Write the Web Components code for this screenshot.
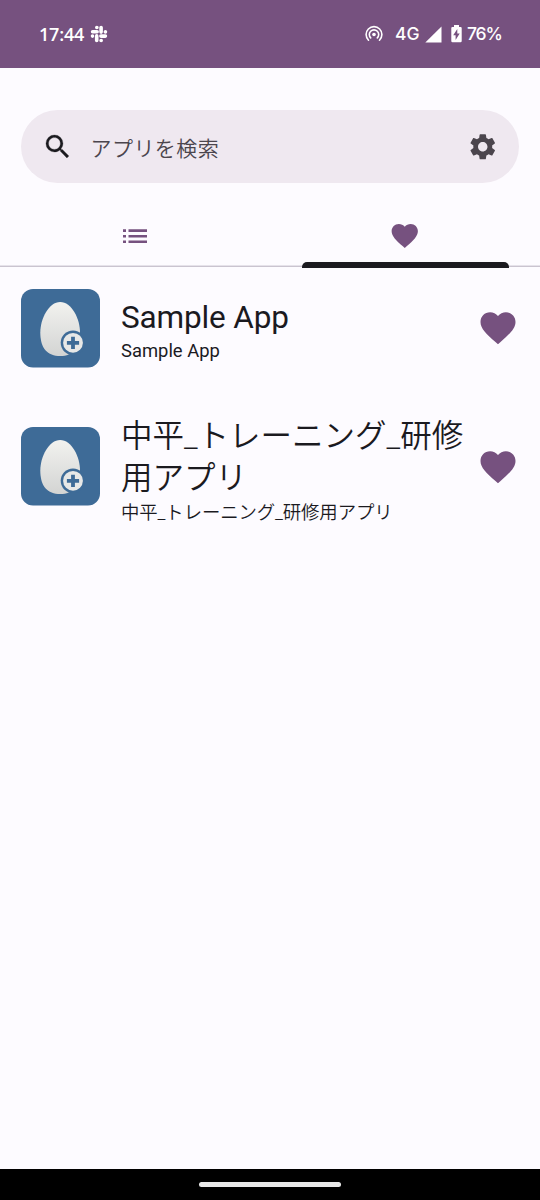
<!DOCTYPE html>
<html lang="ja"><head><meta charset="utf-8"><title>アプリ一覧</title>
<style>
body{margin:0;background:#fdfbff;color:#1b1a1f;font-family:Roboto,"Noto Sans CJK JP",sans-serif}
</style></head><body>
<app-screen></app-screen>
<script>
function define(name, html){
  const t=document.createElement('template'); t.innerHTML=html;
  customElements.define(name, class extends HTMLElement{
    constructor(){super();this.attachShadow({mode:'open'}).append(t.content.cloneNode(true));}
  });
}
define('status-bar',`<style>
:host{display:flex;box-sizing:border-box;height:68px;background:#76517f;color:#fff;align-items:center;padding:0 40px 0 39px;font:500 17.5px/24px Inter,sans-serif}
svg{display:block;flex:none}
.time{width:45px;margin-right:6px;font:600 18px/24px "Open Sans",sans-serif;letter-spacing:-.2px;white-space:nowrap}
.cast{margin-left:auto;margin-right:12px}
.net{width:25px;margin-right:5px;white-space:nowrap}
.sig{margin-right:9px}.bat{margin-right:5px}
.pct{width:33px;white-space:nowrap;letter-spacing:-1.1px}
</style>
<span class="time">17:44</span>
<svg width="18" height="18" viewBox="0 0 18 18" stroke="#fff" stroke-width="3.6" stroke-linecap="round" fill="none"><path d="M6.7 10.9v4.5M10.9 11.1h4.5M11.1 2.6v4.5M2.6 6.8h4.5"/><path d="M6.8 2.5h.1M15.4 6.8v.1M11.1 15.5h.1M2.5 11v.1"/></svg>
<svg class="cast" width="18" height="18" viewBox="0 0 18 18" fill="none" stroke="#fff" stroke-width="1.6" stroke-linecap="round"><path d="M3.5 15.2a7.9 7.9 0 1 1 11 0M5.7 12.9a4.7 4.7 0 1 1 6.6 0"/><circle cx="9" cy="9.5" r="1.8" fill="#fff" stroke="none"/></svg>
<span class="net">4G</span>
<svg class="sig" width="17" height="17" viewBox="0 0 17 17"><path d="M16.5.5v16H.3z" fill="#fff"/></svg>
<svg class="bat" width="11" height="18" viewBox="0 0 11 18"><path d="M3 0h5v2h1.6q1.1 0 1.1 1.1v12.8q0 1.3-1.2 1.3h-8Q.3 17.2.3 16V3.1Q.3 2 1.4 2H3z" fill="#fff"/><path d="M6.3 4 2.2 10.3h2.4V15l4.1-6.4H6.3z" fill="#76517f"/></svg>
<span class="pct">76%</span>`);
define('search-field',`<style>
:host{display:flex;box-sizing:border-box;height:73px;margin:42px 21px 0;border-radius:37px;background:#efe8f0;align-items:center;padding:1px 20.5px 0 21px}
svg{display:block;flex:none}
span{flex:1;margin-left:17px;font-family:"Noto Sans CJK JP DemiLight","Noto Sans CJK JP",sans-serif;font-size:21px;font-weight:350;line-height:32px;letter-spacing:.45px;color:#4b454d}
</style>
<svg width="31.5" height="31.5" viewBox="0 0 24 24" fill="#1b1a1f" stroke="#1b1a1f" stroke-width=".2"><path d="M15.5 14h-.79l-.28-.27A6.47 6.47 0 0 0 16 9.5 6.5 6.5 0 1 0 9.5 16c1.61 0 3.09-.59 4.23-1.57l.27.28v.79l5 4.99L20.49 19l-4.99-5zm-6 0C7.01 14 5 11.99 5 9.5S7.01 5 9.5 5 14 7.01 14 9.5 11.99 14 9.5 14z"/></svg>
<span><slot></slot></span>
<svg width="31.5" height="31.5" viewBox="0 0 24 24" fill="#4b454d"><path d="M19.14 12.94c.04-.3.06-.61.06-.94 0-.32-.02-.64-.07-.94l2.03-1.58c.18-.14.23-.41.12-.61l-1.92-3.32c-.12-.22-.37-.29-.59-.22l-2.39.96c-.5-.38-1.03-.7-1.62-.94l-.36-2.54c-.04-.24-.24-.41-.48-.41h-3.84c-.24 0-.43.17-.47.41l-.36 2.54c-.59.24-1.13.57-1.62.94l-2.39-.96c-.22-.08-.47 0-.59.22L2.74 8.87c-.12.21-.08.47.12.61l2.03 1.58c-.05.3-.09.63-.09.94s.02.64.07.94l-2.03 1.58c-.18.14-.23.41-.12.61l1.92 3.32c.12.22.37.29.59.22l2.39-.96c.5.38 1.03.7 1.62.94l.36 2.54c.05.24.24.41.48.41h3.84c.24 0 .44-.17.47-.41l.36-2.54c.59-.24 1.13-.56 1.62-.94l2.39.96c.22.08.47 0 .59-.22l1.92-3.32c.12-.22.07-.47-.12-.61l-2.01-1.58zM12 15.6c-1.98 0-3.6-1.62-3.6-3.6s1.62-3.6 3.6-3.6 3.6 1.62 3.6 3.6-1.62 3.6-3.6 3.6z"/></svg>`);
define('heart-icon',`<style>:host{display:block;flex:none;width:var(--size,31.5px);height:var(--size,31.5px)}svg{display:block;width:100%;height:100%}</style>
<svg viewBox="0 0 24 24" fill="#76517f"><path d="M12 21.35l-1.45-1.32C5.4 15.36 2 12.28 2 8.5 2 5.42 4.42 3 7.5 3c1.74 0 3.41.81 4.5 2.09C13.09 3.81 14.76 3 16.5 3 19.58 3 22 5.42 22 8.5c0 3.78-3.4 6.86-8.55 11.54L12 21.35z"/></svg>`);
define('tab-bar',`<style>
:host{display:grid;grid-template-columns:1fr 1fr;box-sizing:border-box;height:63px;margin-top:21px;background:linear-gradient(#cac4d0,#cac4d0) 0 62px/100% 1px no-repeat,linear-gradient(#e6e2ea,#e6e2ea) 0 61px/100% 2px no-repeat}
div{display:grid;grid-template-rows:58px 5px;justify-items:center;align-items:center}
.list{display:block;margin-top:6px}heart-icon{margin-top:5px}
.bar{width:207px;height:5.5px;border-radius:5px 5px 0 0;background:#1b1a1f;align-self:start}
</style>
<div><svg class="list" width="24" height="15" viewBox="0 0 24 15" fill="#76517f"><path d="M0 .3h3v2.6H0zM0 5.9h3v2.6H0zM0 11.5h3v2.6H0zM5.5.3H24v2.6H5.5zM5.5 5.9H24v2.6H5.5zM5.5 11.5H24v2.6H5.5z"/></svg></div>
<div><heart-icon></heart-icon><span class="bar"></span></div>`);
define('egg-icon',`<style>:host{display:block;flex:none;width:79px;height:79px}svg{display:block}</style>
<svg width="79" height="79" viewBox="0 0 79 79"><defs><linearGradient id="g" x2="0" y2="1"><stop stop-color="#f2f2ef"/><stop offset="1" stop-color="#d3d4d3"/></linearGradient></defs>
<rect width="79" height="78.5" rx="12" fill="#3e6b97"/><path d="M39.2 13C50.5 13 59 29.5 59 43.5 59 59.5 52 67 39.2 67S19.3 59.5 19.3 43.5C19.3 29.5 28 13 39.2 13z" fill="url(#g)"/><circle cx="52" cy="53.8" r="12.3" fill="#3e6b97"/><circle cx="52" cy="53.8" r="9.9" fill="#e7e8e7"/><path d="M52 47.7v12.2M45.9 53.8h12.2" stroke="#3e6b97" stroke-width="3.8"/></svg>`);
define('app-row',`<style>
:host{display:flex;box-sizing:border-box;align-items:center;padding:0 21px}
.t{flex:1;margin-left:21px;padding-top:var(--shift,4px);min-width:0}
.n{font-size:31.5px;line-height:42px;width:346px;letter-spacing:var(--ls,0)}
.s{font-size:18.4px;line-height:var(--sub,26px);letter-spacing:var(--sls,0)}
heart-icon{--size:42px}
</style><egg-icon></egg-icon><div class="t"><div class="n"><slot name="name"></slot></div><div class="s"><slot></slot></div></div><heart-icon></heart-icon>`);
define('nav-bar',`<style>:host{display:flex;height:31.5px;background:#000;justify-content:center;align-items:center}i{width:142px;height:5px;border-radius:3px;background:#e8e8e8}</style><i></i>`);
define('app-screen',`<style>
:host{display:flex;flex-direction:column;width:540px;height:1200px;overflow:hidden}
app-row{height:122px;--ls:-.15px;--sub:24px;--shift:3px}
app-row+app-row{height:155px;font-family:Roboto,"Noto Sans CJK JP DemiLight","Noto Sans CJK JP",sans-serif;font-weight:350;--ls:0;--sub:25px;--shift:8px;--sls:-.12px}
nav-bar{margin-top:auto}
</style><status-bar></status-bar><search-field>アプリを検索</search-field><tab-bar></tab-bar>
<app-row><span slot="name">Sample App</span>Sample App</app-row>
<app-row><span slot="name">中平_トレーニング_研修用アプリ</span>中平_トレーニング_研修用アプリ</app-row>
<nav-bar></nav-bar>`);
</script></body></html>
